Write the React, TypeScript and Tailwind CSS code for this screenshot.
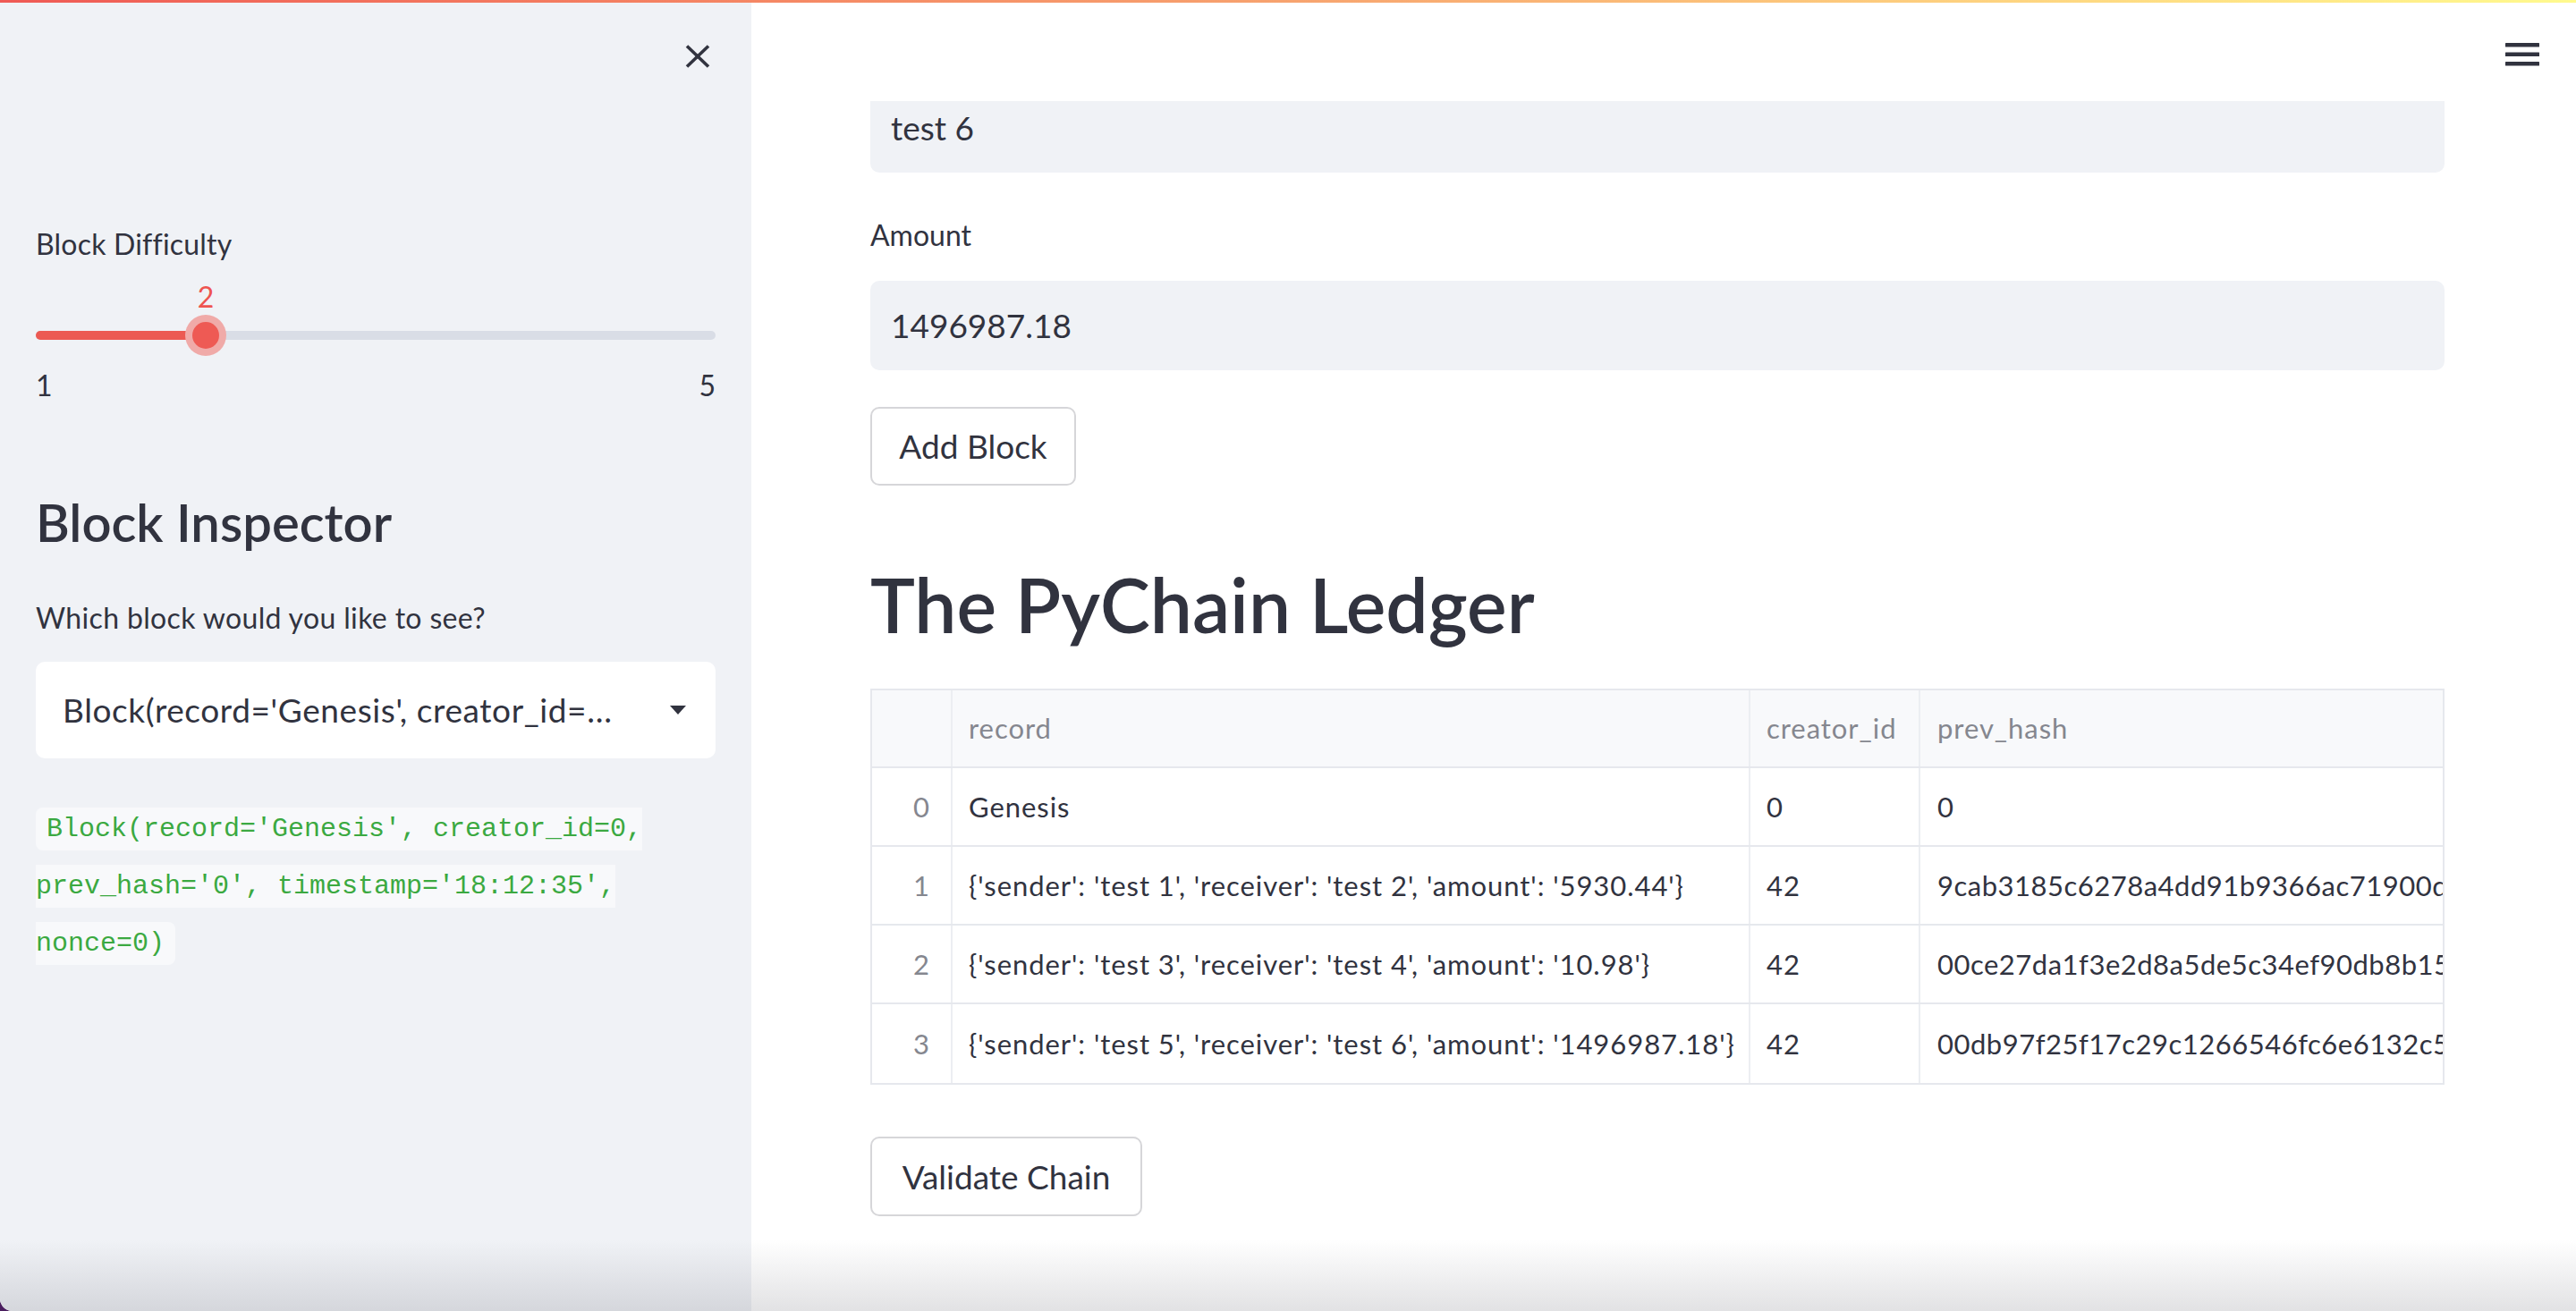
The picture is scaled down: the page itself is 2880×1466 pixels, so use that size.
import React from "react";

const rows = [
  { i: "0", record: "Genesis", creator: "0", hash: "0" },
  {
    i: "1",
    record: "{'sender': 'test 1', 'receiver': 'test 2', 'amount': '5930.44'}",
    creator: "42",
    hash: "9cab3185c6278a4dd91b9366ac71900d2f4e8a1b7c3d5e6f90a1b2c3d4e5f607",
  },
  {
    i: "2",
    record: "{'sender': 'test 3', 'receiver': 'test 4', 'amount': '10.98'}",
    creator: "42",
    hash: "00ce27da1f3e2d8a5de5c34ef90db8b15a7c2e9d41f6b3a08c5e7d2f1b4a9c63",
  },
  {
    i: "3",
    record: "{'sender': 'test 5', 'receiver': 'test 6', 'amount': '1496987.18'}",
    creator: "42",
    hash: "00db97f25f17c29c1266546fc6e6132c56b8e1d4a7f3c0b92e6d5a8f1c4b7e30",
  },
];

function Sidebar() {
  return (
    <aside className="w-[840px] shrink-0 h-full bg-[#f0f2f6] px-[40px] flex flex-col">
      <div className="flex justify-end mt-[50px] h-[26px] pr-[6px]">
        <svg width="28" height="26" viewBox="0 0 28 26">
          <line x1="2" y1="1.5" x2="26" y2="24.5" stroke="#31333f" strokeWidth="3.6" />
          <line x1="26" y1="1.5" x2="2" y2="24.5" stroke="#31333f" strokeWidth="3.6" />
        </svg>
      </div>

      <div className="mt-[177px] text-[32px] leading-[40px] tracking-[0.2px]">Block Difficulty</div>

      <div className="mt-[19px]">
        <div className="relative h-[40px]">
          <span className="absolute left-[190px] top-0 -translate-x-1/2 text-[32px] leading-[40px] text-[#ee5450]">
            2
          </span>
        </div>
        <div className="relative h-[46px] flex items-center">
          <div className="w-full h-[10px] rounded-full bg-[#d9dde6] overflow-hidden">
            <div className="h-full w-[190px] bg-[#ec5a53]" />
          </div>
          <div className="absolute left-[167px] top-0 w-[46px] h-[46px] rounded-full bg-[#f0aaa8] flex items-center justify-center">
            <div className="w-[30px] h-[30px] rounded-full bg-[#ee5a54]" />
          </div>
        </div>
        <div className="mt-[13px] flex justify-between text-[32px] leading-[40px]">
          <span>1</span>
          <span>5</span>
        </div>
      </div>

      <h2 className="mt-[98px] text-[58px] leading-[70px] font-semibold">Block Inspector</h2>

      <div className="mt-[52px] text-[32px] leading-[40px] tracking-[0.35px]">
        Which block would you like to see?
      </div>

      <div className="mt-[29px] h-[108px] rounded-[10px] bg-white flex items-center pl-[30px] pr-[33px]">
        <div className="w-[628px] truncate text-[37px] tracking-[0.6px]">
          Block(record='Genesis', creator_id=0, prev_hash='0', timestamp='18:12:35', nonce=0)
        </div>
        <div className="flex-1" />
        <svg width="18" height="10" viewBox="0 0 18 10">
          <path d="M0 0 L18 0 L9 10 Z" fill="#31333f" />
        </svg>
      </div>

      <p className="mt-[47px] font-['Liberation_Mono',monospace] text-[30px] leading-[64px]">
        <code className="font-['Liberation_Mono',monospace] text-[30px] text-[#3ba941] bg-[#f8f9fb] rounded-[8px] px-[12px] py-[7px]">
          Block(record='Genesis', creator_id=0, prev_hash='0', timestamp='18:12:35', nonce=0)
        </code>
      </p>
    </aside>
  );
}

function Button({ label, w }: { label: string; w: string }) {
  return (
    <button
      className={`${w} h-[88px] rounded-[10px] border-2 border-[#d6d6d9] bg-white text-[37px] text-[#31333f] flex items-center justify-center`}
    >
      {label}
    </button>
  );
}

function Table() {
  const cols = "grid grid-cols-[90px_892px_190px_1fr]";
  return (
    <div className="mt-[44px] border-2 border-[#e6e8ed] text-[31px] tracking-[0.95px]">
      <div className={`${cols} h-[87px] bg-[#f8f9fb] border-b-2 border-[#e6e8ed] text-[#85878f]`}>
        <div className="border-r-2 border-[#eceef2]" />
        <div className="border-r-2 border-[#eceef2] flex items-center pl-[18px]">record</div>
        <div className="border-r-2 border-[#eceef2] flex items-center pl-[18px]">creator_id</div>
        <div className="flex items-center pl-[19px]">prev_hash</div>
      </div>
      {rows.map((r, idx) => (
        <div
          key={r.i}
          className={`${cols} h-[88px] ${idx < rows.length - 1 ? "border-b-2 border-[#e6e8ed]" : ""}`}
        >
          <div className="border-r-2 border-[#eceef2] flex items-center justify-end pr-[23px] text-[#85878f]">
            {r.i}
          </div>
          <div className="border-r-2 border-[#eceef2] flex items-center pl-[18px] whitespace-nowrap overflow-hidden">
            {r.record}
          </div>
          <div className="border-r-2 border-[#eceef2] flex items-center pl-[18px]">{r.creator}</div>
          <div className="flex items-center pl-[19px] whitespace-nowrap overflow-hidden tracking-[0.5px]">
            {r.hash}
          </div>
        </div>
      ))}
    </div>
  );
}

function Main() {
  return (
    <main className="relative flex-1 h-full bg-white">
      <div className="pl-[133px] pt-[93px] w-[1893px] flex flex-col items-start">
        <div className="w-[1760px] h-[100px] rounded-[10px] bg-[#f0f2f6] flex items-center pl-[23px] text-[37px]">
          test 6
        </div>
        <div className="mt-[50px] text-[32px] leading-[40px]">Amount</div>
        <div className="mt-[31px] w-[1760px] h-[100px] rounded-[10px] bg-[#f0f2f6] flex items-center pl-[23px] text-[37px]">
          1496987.18
        </div>
        <div className="mt-[41px]">
          <Button label="Add Block" w="w-[230px]" />
        </div>
        <h1 className="mt-[83px] text-[84px] leading-[100px] font-semibold">The PyChain Ledger</h1>
        <div className="w-[1760px]">
          <Table />
        </div>
        <div className="mt-[58px]">
          <Button label="Validate Chain" w="w-[304px] h-[89px]" />
        </div>
      </div>

      <header className="absolute top-0 left-0 right-0 h-[113px] bg-white flex justify-end pt-[48px] pr-[41px]">
        <svg width="38" height="26" viewBox="0 0 38 26">
          <rect x="0" y="0" width="38" height="4.5" rx="0.5" fill="#31333f" />
          <rect x="0" y="10.5" width="38" height="4.5" rx="0.5" fill="#31333f" />
          <rect x="0" y="21" width="38" height="4.5" rx="0.5" fill="#31333f" />
        </svg>
      </header>
    </main>
  );
}

export default function App() {
  return (
    <div className="relative w-[2880px] h-[1466px] overflow-hidden bg-[#4a1d5e] font-['Lato',sans-serif] text-[#31333f]">
      <div className="flex h-full w-full rounded-bl-[14px] overflow-hidden bg-white">
        <Sidebar />
        <Main />
      </div>
      <div className="absolute top-0 left-0 right-0 h-[3px] bg-gradient-to-r from-[#ef5a55] via-[#f7a36f] to-[#fffa8e]" />
      <div className="pointer-events-none absolute bottom-0 left-0 right-0 h-[80px] bg-gradient-to-b from-transparent to-[rgba(30,30,45,0.13)] rounded-bl-[14px]" />
    </div>
  );
}
